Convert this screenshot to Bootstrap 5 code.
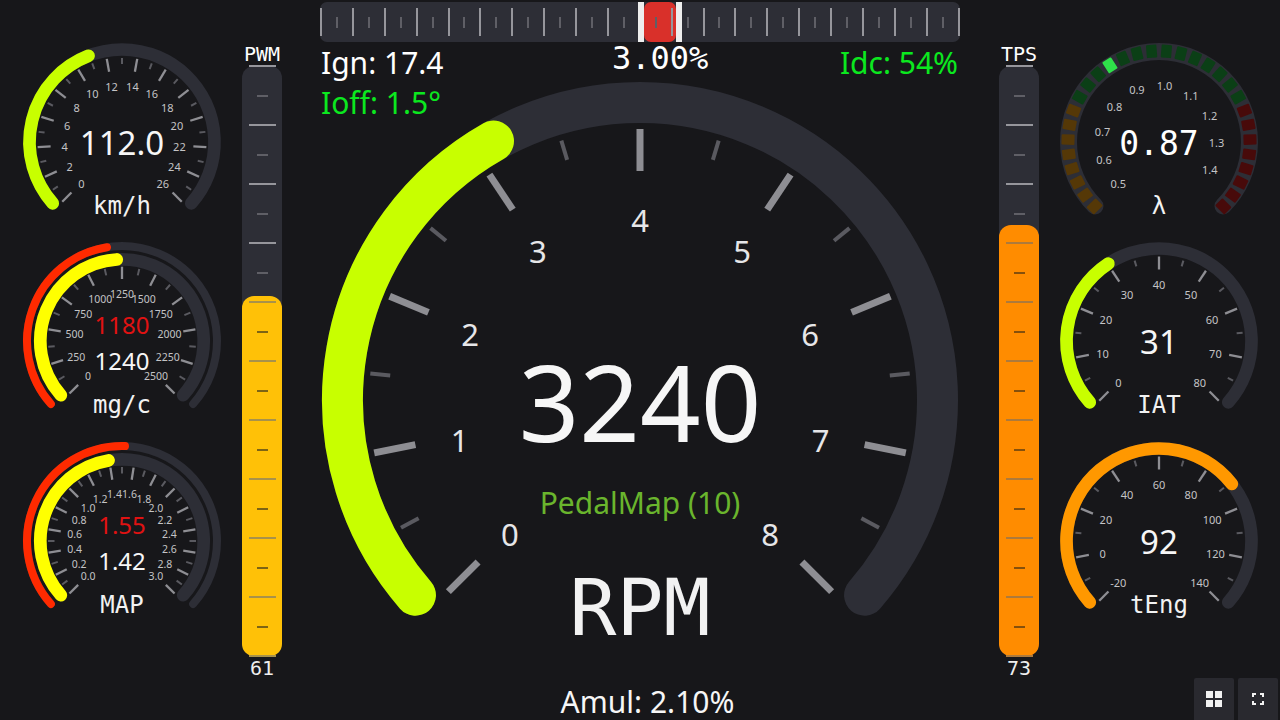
<!DOCTYPE html>
<html lang="en">
<head>
<meta charset="utf-8">
<meta name="viewport" content="width=device-width, initial-scale=1">
<title>Engine Dash</title>
<link href="https://cdn.jsdelivr.net/npm/bootstrap@5.3.2/dist/css/bootstrap.min.css" rel="stylesheet">
<style>
  html, body { height: 100%; }
  body {
    background: #17171a;
    color: #fff;
    font-family: "Noto Sans", sans-serif;
    overflow: hidden;
  }
  .dash { height: 720px; width: 1280px; }

  /* side columns */
  .gauge-col-left { width: 242px; padding: 41.5px 0 0 22.2px; }
  .gauge-col-right { width: 241px; padding: 41.5px 2px 0 19.8px; }
  .mini-gauge { display: block; width: 200px; height: 199.5px; overflow: visible; flex: none; }
  .corner-btns { margin-top: auto; padding-bottom: 0; }
  .corner-btn {
    width: 40px; height: 42px; padding: 0; border: 0; border-radius: 2px 2px 0 0;
    background: #29292f; display: flex; align-items: center; justify-content: center;
  }
  .corner-btn:hover { background: #33333a; }

  /* vertical bars */
  .bar-col { width: 40px; }
  .bar-name { height: 66px; padding-top: 42px; font: 20px/24px "DejaVu Sans Mono", monospace; text-align: center; }
  .bar-track { height: 590px; position: relative; background: #2d2e36; border-radius: 12px; }
  .bar-fill { position: absolute; left: 0; right: 0; bottom: 0; border-radius: 12px; }
  .fill-yellow { background: #ffc107; }
  .fill-orange { background: #ff8c00; }
  .bar-ticks {
    position: absolute; top: -1px; bottom: -1px; left: 0; right: 0;
    display: flex; flex-direction: column; justify-content: space-between; align-items: center;
  }
  .bar-tick { height: 2px; width: 11px; background: #5f5f66; }
  .bar-tick.major { width: 27px; background: #96969c; }
  .bar-tick.over { background: #7d6414; }
  .bar-tick.over.major { background: #a8924a; }
  .bar-tick.over-o { background: #85500c; }
  .bar-tick.over-o.major { background: #ad7a3c; }
  .bar-val { font: 20px/24px "DejaVu Sans Mono", monospace; text-align: center; color: #eee; }

  /* centre */
  .centre-col { width: 717px; padding: 2px 39px 0 38px; }
  .trim-scale {
    height: 40px; position: relative; background: #2d2e36; border-radius: 7px;
    display: flex; justify-content: space-between; align-items: center;
  }
  .trim-tick { width: 2px; height: 28px; background: #96969c; position: relative; z-index: 2; }
  .trim-tick.minor { height: 11px; background: #5f5f66; }
  .trim-mark {
    position: absolute; top: 0; bottom: 0; left: 324px; width: 32px;
    background: #d9302a; border-radius: 7px;
  }
  .trim-mark::before, .trim-mark::after {
    content: ""; position: absolute; top: 0; bottom: 0; width: 6px; background: #eee; z-index: 3;
  }
  .trim-mark::before { left: -6px; }
  .trim-mark::after { right: -6px; }
  .info-row { height: 38px; padding-top: 1px; position: relative; z-index: 1; }
  .info-line { font-size: 30px; line-height: 40px; white-space: nowrap; padding-left: 1px; padding-right: 2px; }
  .info-green { color: #0be81f; }
  .info-pct { font: 32px/32px "DejaVu Sans Mono", monospace; position: absolute; left: 292px; top: 0; }
  .main-gauge { display: block; width: 640px; height: 640px; overflow: visible; }

  /* svg bits */
  .g-track { fill: none; stroke: #2d2e36; stroke-linecap: round; }
  .g-arc { fill: none; stroke-linecap: round; }
  .g-major { stroke: #8e8e93; }
  .g-minor { stroke: #5a5a60; }
  .g-label { fill: #c4c4c6; text-anchor: middle; font-family: "Noto Sans", sans-serif; }
  .g-label-big { fill: #e6e6e8; text-anchor: middle; font-family: "Noto Sans", sans-serif; }
  .g-value { fill: #f6f6f6; text-anchor: middle; font-family: "Noto Sans", sans-serif; }
  .g-mono { fill: #f2f2f2; text-anchor: middle; font-family: "DejaVu Sans Mono", monospace; }
</style>
</head>
<body>
<div class="dash d-flex">

  <div class="gauge-col-left d-flex flex-column">
    <svg class="mini-gauge" id="gSpeed"></svg>
    <svg class="mini-gauge" id="gMaf"></svg>
    <svg class="mini-gauge" id="gMap"></svg>
  </div>

  <div class="bar-col">
    <div class="bar-name">PWM</div>
    <div class="bar-track" data-val="61" data-color="yellow"></div>
    <div class="bar-val">61</div>
  </div>

  <div class="centre-col">
    <div class="trim-scale" id="trim"><div class="trim-mark"></div></div>
    <div class="info-row d-flex justify-content-between">
      <div>
        <div class="info-line">Ign: 17.4</div>
        <div class="info-line info-green">Ioff: 1.5°</div>
      </div>
      <div class="info-pct">3.00%</div>
      <div class="info-line info-green">Idc: 54%</div>
    </div>
    <svg class="main-gauge" id="gRpm"></svg>
  </div>

  <div class="bar-col">
    <div class="bar-name">TPS</div>
    <div class="bar-track" data-val="73" data-color="orange"></div>
    <div class="bar-val">73</div>
  </div>

  <div class="gauge-col-right d-flex flex-column">
    <svg class="mini-gauge" id="gLambda"></svg>
    <svg class="mini-gauge" id="gIat"></svg>
    <svg class="mini-gauge" id="gTeng"></svg>
    <div class="corner-btns d-flex justify-content-end gap-1">
      <button type="button" class="btn corner-btn" aria-label="Layout">
        <svg width="16" height="16" viewBox="0 0 16 16"><path fill="#f2f2f2" d="M0 0h7v7H0zM9 0h7v7H9zM0 9h7v7H0zM9 9h7v7H9z"/></svg>
      </button>
      <button type="button" class="btn corner-btn" aria-label="Fullscreen">
        <svg width="12" height="12" viewBox="0 0 12 12"><path fill="none" stroke="#f2f2f2" stroke-width="2" d="M1 4V1h3M8 1h3v3M11 8v3H8M4 11H1V8"/></svg>
      </button>
    </div>
  </div>

</div>

<script>
  const END = 131.5;

  function pt(cx, cy, deg, r) {
    const a = deg * Math.PI / 180;
    return [cx + r * Math.sin(a), cy - r * Math.cos(a)];
  }

  function arcPath(cx, cy, r, from, to) {
    const p0 = pt(cx, cy, from, r), p1 = pt(cx, cy, to, r);
    const big = to - from > 180 ? 1 : 0;
    return `M${p0[0].toFixed(2)} ${p0[1].toFixed(2)}A${r} ${r} 0 ${big} 1 ${p1[0].toFixed(2)} ${p1[1].toFixed(2)}`;
  }

  function ring(c, r, w, stroke, from, to) {
    const cls = stroke ? 'g-arc' : 'g-track';
    const col = stroke ? ` stroke="${stroke}"` : '';
    return `<path class="${cls}"${col} stroke-width="${w}" d="${arcPath(c, c, r, from, to)}"/>`;
  }

  function tick(c, deg, r0, r1, w, cls) {
    const a = pt(c, c, deg, r0), b = pt(c, c, deg, r1);
    return `<line class="${cls}" stroke-width="${w}" x1="${a[0].toFixed(2)}" y1="${a[1].toFixed(2)}" x2="${b[0].toFixed(2)}" y2="${b[1].toFixed(2)}"/>`;
  }

  function text(cls, x, y, size, str, fill) {
    const f = fill ? ` style="fill:${fill}"` : '';
    return `<text class="${cls}" x="${x}" y="${y}" font-size="${size}"${f}>${str}</text>`;
  }

  // ticks + numbers, majors spread over -135..135 with a minor between each
  function scale(c, labels, o) {
    let s = '';
    const n = labels.length - 1;
    for (let i = 0; i <= n * 2; i++) {
      const deg = -135 + 270 * i / (n * 2);
      if (i % 2 === 0) {
        s += tick(c, deg, o.maj[0], o.maj[1], o.majW, 'g-major');
        const p = pt(c, c, deg, o.labelR);
        s += text(o.labelCls || 'g-label', p[0].toFixed(1), (p[1] + o.labelDy + o.labelSize * 0.357).toFixed(1), o.labelSize, labels[i / 2]);
      } else {
        s += tick(c, deg, o.min[0], o.min[1], o.minW, 'g-minor');
      }
    }
    return s;
  }

  function range(from, step, count, dec) {
    return Array.from({ length: count }, (_, i) => (from + step * i).toFixed(dec));
  }

  const single = { maj: [84.5, 71.5], min: [84, 78], majW: 2.3, minW: 2, labelR: 57.5, labelDy: 1.5, labelSize: 11 };
  const dbl = { maj: [74.3, 62], min: [74, 67.5], majW: 2.3, minW: 2, labelR: 48, labelDy: 1, labelSize: 10.5 };

  // one ring gauges
  function singleGauge(id, labels, end, color, value, unit) {
    document.getElementById(id).innerHTML =
      ring(100, 92.5, 12.7, null, -END, END) +
      ring(100, 92.5, 12.7, color, -END, end) +
      scale(100, labels, single) +
      text('g-value', 100, 112.8, 33, value) +
      text('g-mono', 100, 172, 24, unit);
  }

  // two ring gauges, red target outside and yellow actual inside
  function doubleGauge(id, labels, redEnd, yelEnd, target, value, unit) {
    document.getElementById(id).innerHTML =
      ring(100, 95, 8, null, -END, END) +
      ring(100, 81.7, 12.7, null, -END, END) +
      ring(100, 95, 8, '#ff2a00', -END, redEnd) +
      ring(100, 81.7, 12.7, '#ffff00', -END, yelEnd) +
      scale(100, labels, dbl) +
      text('g-value', 100, 92.5, 24, target, '#e01212') +
      text('g-value', 100, 129, 24, value) +
      text('g-mono', 100, 172, 24, unit);
  }

  singleGauge('gSpeed', range(0, 2, 14, 0), -21.2, '#c8ff00', '112.0', 'km/h');
  doubleGauge('gMaf', range(0, 250, 11, 0), -9.1, -3.7, '1180', '1240', 'mg/c');
  doubleGauge('gMap', range(0, 0.2, 16, 1), 1.8, -9.5, '1.55', '1.42', 'MAP');
  singleGauge('gIat', range(0, 10, 9, 0), -33.2, '#c8ff00', '31', 'IAT');
  singleGauge('gTeng', range(-20, 20, 9, 0), 51.9, '#ff9800', '92', 'tEng');

  // lambda: 30 blocks on a ring
  (function () {
    let s = ring(100, 90.5, 17, null, -135, 135);
    for (let i = 0; i < 30; i++) {
      const deg = -135 + 270 * i / 29;
      const p = pt(100, 100, deg, 91);
      let col = i < 8 ? '#553807' : i < 22 ? '#0b3f16' : '#480a0a';
      if (i === 11) col = '#2fe04a';
      s += `<rect x="-5.2" y="-6.5" width="10.4" height="13" rx="1" fill="${col}" transform="translate(${p[0].toFixed(2)} ${p[1].toFixed(2)}) rotate(${deg.toFixed(2)})"/>`;
    }
    range(0.5, 0.1, 10, 1).forEach((lab, k) => {
      const p = pt(100, 100, -135 + 28.1 * k, 57.5);
      s += text('g-label', p[0].toFixed(1), (p[1] + 1.5 + 3.9).toFixed(1), 11, lab);
    });
    s += text('g-mono', 100, 112.5, 33, '0.87', '#fff');
    s += text('g-mono', 100, 172, 24, 'λ');
    document.getElementById('gLambda').innerHTML = s;
  })();

  // main rpm gauge
  (function () {
    let s = ring(320, 297.5, 41, null, -131, 131) +
      ring(320, 297.5, 41, '#c8ff00', -131, -29.5);
    s += scale(320, range(0, 1, 9, 0), { maj: [271, 229], min: [271, 251], majW: 7, minW: 4, labelR: 184, labelDy: 5, labelSize: 31, labelCls: 'g-label-big' });
    s += text('g-value', 320, 361.5, 106, '3240');
    s += text('g-value', 320, 433.5, 30, 'PedalMap (10)', '#6ab52d');
    s += text('g-mono', 320, 554.5, 78, 'RPM');
    s += text('g-value', 327.5, 632.5, 30, 'Amul: 2.10%');
    document.getElementById('gRpm').innerHTML = s;
  })();

  // vertical bars, 21 ticks with a longer one every second
  document.querySelectorAll('.bar-track').forEach(track => {
    const val = +track.dataset.val;
    const over = track.dataset.color === 'yellow' ? 'over' : 'over-o';
    const fill = document.createElement('div');
    fill.className = 'bar-fill fill-' + track.dataset.color;
    fill.style.height = val + '%';
    track.appendChild(fill);
    let html = '';
    for (let i = 0; i <= 20; i++) {
      const isOver = (20 - i) * 5 <= val;
      html += `<div class="bar-tick${i % 2 === 0 ? ' major' : ''}${isOver ? ' ' + over : ''}"></div>`;
    }
    const ticks = document.createElement('div');
    ticks.className = 'bar-ticks';
    ticks.innerHTML = html;
    track.appendChild(ticks);
  });

  // top trim scale
  const trim = document.getElementById('trim');
  for (let i = 0; i <= 40; i++) {
    const t = document.createElement('div');
    t.className = 'trim-tick' + (i % 2 ? ' minor' : '');
    trim.appendChild(t);
  }
</script>
<script src="https://cdn.jsdelivr.net/npm/bootstrap@5.3.2/dist/js/bootstrap.bundle.min.js"></script>
</body>
</html>
